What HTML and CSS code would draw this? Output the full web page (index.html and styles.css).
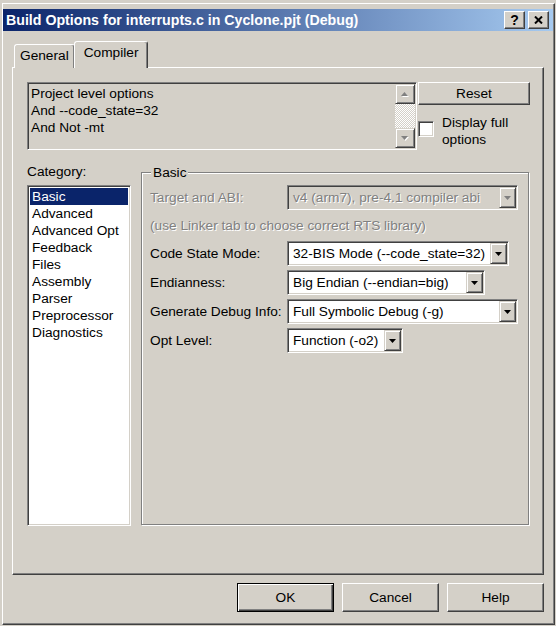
FILE: index.html
```html
<!DOCTYPE html>
<html>
<head>
<meta charset="utf-8">
<title>Build Options</title>
<link rel="stylesheet" href="styles.css">
</head>
<body>
<div class="window">
  <div class="titlebar">
    <span class="title">Build Options for interrupts.c in Cyclone.pjt (Debug)</span>
    <div class="tb-buttons">
      <span class="tb-btn help">?</span>
      <span class="tb-btn close"><svg width="9" height="8" viewBox="0 0 9 8"><path d="M1 0.5 L8 7.5 M8 0.5 L1 7.5" stroke="#000" stroke-width="2" fill="none"/></svg></span>
    </div>
  </div>
  <div class="content">
    <div class="tabs">
      <div class="tab">General</div>
      <div class="tab active">Compiler</div>
    </div>
    <div class="panel">
      <div class="top-row">
        <div class="options-box">
          <div class="options-text">Project level options<br>And --code_state=32<br>And Not -mt</div>
          <div class="vscroll">
            <div class="sb-btn"><svg width="8" height="5" viewBox="0 0 8 5"><path d="M4.5 1 L8 5 L1 5 Z" fill="#fff"/><path d="M3.5 0 L7 4 L0 4 Z" fill="#808080"/></svg></div>
            <div class="sb-track"></div>
            <div class="sb-btn"><svg width="8" height="5" viewBox="0 0 8 5"><path d="M1 1 L8 1 L4.5 5 Z" fill="#fff"/><path d="M0 0 L7 0 L3.5 4 Z" fill="#808080"/></svg></div>
          </div>
        </div>
        <div class="side">
          <div class="btn reset">Reset</div>
          <div class="check">
            <span class="checkbox"></span>
            <span class="check-label">Display full<br>options</span>
          </div>
        </div>
      </div>
      <div class="main-row">
        <div class="category">
          <div class="cat-label">Category:</div>
          <div class="listbox">
            <div class="item selected">Basic</div>
            <div class="item">Advanced</div>
            <div class="item">Advanced Opt</div>
            <div class="item">Feedback</div>
            <div class="item">Files</div>
            <div class="item">Assembly</div>
            <div class="item">Parser</div>
            <div class="item">Preprocessor</div>
            <div class="item">Diagnostics</div>
          </div>
        </div>
        <div class="group">
          <div class="legend">Basic</div>
          <div class="row first">
            <span class="label disabled">Target and ABI:</span>
            <div class="combo is-disabled w231">
              <span class="combo-text">v4 (arm7), pre-4.1 compiler abi</span>
              <span class="combo-btn"><svg width="7" height="4" viewBox="0 0 7 4"><path d="M0 0 L7 0 L3.5 4 Z" fill="#808080"/></svg></span>
            </div>
          </div>
          <div class="note disabled">(use Linker tab to choose correct RTS library)</div>
          <div class="row after-note">
            <span class="label">Code State Mode:</span>
            <div class="combo w222">
              <span class="combo-text">32-BIS Mode (--code_state=32)</span>
              <span class="combo-btn"><svg width="7" height="4" viewBox="0 0 7 4"><path d="M0 0 L7 0 L3.5 4 Z" fill="#000"/></svg></span>
            </div>
          </div>
          <div class="row">
            <span class="label">Endianness:</span>
            <div class="combo w198">
              <span class="combo-text">Big Endian (--endian=big)</span>
              <span class="combo-btn"><svg width="7" height="4" viewBox="0 0 7 4"><path d="M0 0 L7 0 L3.5 4 Z" fill="#000"/></svg></span>
            </div>
          </div>
          <div class="row">
            <span class="label">Generate Debug Info:</span>
            <div class="combo w231">
              <span class="combo-text">Full Symbolic Debug (-g)</span>
              <span class="combo-btn"><svg width="7" height="4" viewBox="0 0 7 4"><path d="M0 0 L7 0 L3.5 4 Z" fill="#000"/></svg></span>
            </div>
          </div>
          <div class="row">
            <span class="label">Opt Level:</span>
            <div class="combo w116">
              <span class="combo-text">Function (-o2)</span>
              <span class="combo-btn"><svg width="7" height="4" viewBox="0 0 7 4"><path d="M0 0 L7 0 L3.5 4 Z" fill="#000"/></svg></span>
            </div>
          </div>
        </div>
      </div>
    </div>
    <div class="footer">
      <div class="btn dlg default">OK</div>
      <div class="btn dlg">Cancel</div>
      <div class="btn dlg">Help</div>
    </div>
  </div>
</div>
</body>
</html>
```
FILE: styles.css
```css
* { box-sizing: border-box; }
html, body { margin: 0; padding: 0; }
body {
  width: 556px;
  height: 626px;
  overflow: hidden;
  background: #d4d0c8;
  font-family: "Liberation Sans", Arial, sans-serif;
  font-size: 13.7px;
  line-height: 17px;
  color: #000;
}
.window {
  margin: 3px 0 0 2px;
  width: 553px;
  height: 622px;
  border: 1px solid;
  border-color: #fff #404040 #404040 #fff;
  box-shadow: inset -1px -1px #808080;
  padding: 5px 1px 0 0;
}
.titlebar {
  height: 22px;
  background: linear-gradient(to right, #0a246a, #a6caf0);
  display: flex;
  align-items: center;
  justify-content: space-between;
  padding: 0 4px 0 3px;
}
.title {
  color: #fff;
  font-weight: bold;
  font-size: 14.2px;
  white-space: nowrap;
}
.tb-buttons { display: flex; gap: 3px; }
.tb-btn {
  width: 21px;
  height: 18px;
  background: #d4d0c8;
  border: 1px solid;
  border-color: #fff #404040 #404040 #fff;
  box-shadow: inset -1px -1px #808080;
  display: flex;
  align-items: center;
  justify-content: center;
  font-weight: bold;
  font-size: 14px;
  line-height: 14px;
}
.content { padding: 11px 0 0 9px; }
.tabs {
  display: flex;
  align-items: flex-end;
  height: 26px;
  padding-left: 2px;
  margin-bottom: -1px;
}
.tab {
  height: 24px;
  line-height: 21px;
  padding: 0 5px;
  border: 1px solid;
  border-bottom: none;
  border-color: #fff #404040 transparent #fff;
  border-radius: 3px 3px 0 0;
  box-shadow: inset -1px 0 #808080;
  background: #d4d0c8;
}
.tab.active {
  position: relative;
  z-index: 1;
  height: 27px;
  line-height: 21px;
  margin-left: -1px;
  padding: 0 9px;
}
.panel {
  width: 532px;
  height: 508px;
  border: 1px solid;
  border-color: #fff #404040 #404040 #fff;
  box-shadow: inset -1px -1px #808080;
  padding: 14px 0 0 14px;
}
.top-row { display: flex; }
.options-box {
  width: 390px;
  height: 68px;
  display: flex;
  border: 1px solid;
  border-color: #808080 #fff #fff #808080;
  box-shadow: inset 1px 1px #404040, inset -1px -1px #d4d0c8;
  padding: 1px;
}
.options-text {
  flex: 1;
  padding: 1px 0 0 2px;
  white-space: nowrap;
}
.vscroll {
  width: 20px;
  display: flex;
  flex-direction: column;
}
.sb-btn {
  height: 20px;
  background: #d4d0c8;
  border: 1px solid;
  border-color: #d4d0c8 #404040 #404040 #d4d0c8;
  box-shadow: inset 1px 1px #fff, inset -1px -1px #808080;
  display: flex;
  align-items: center;
  justify-content: center;
}
.sb-track {
  flex: 1;
  background: repeating-conic-gradient(#fff 0 25%, #d4d0c8 0 50%) 0 0 / 2px 2px;
}
.side {
  width: 112px;
  margin-left: 1px;
  display: flex;
  flex-direction: column;
}
.btn {
  background: #d4d0c8;
  border: 1px solid;
  border-color: #fff #404040 #404040 #fff;
  box-shadow: inset -1px -1px #808080;
  display: flex;
  align-items: center;
  justify-content: center;
}
.reset { height: 23px; }
.check {
  display: flex;
  align-items: flex-start;
  margin-top: 16px;
}
.checkbox {
  width: 16px;
  height: 16px;
  background: #fff;
  border: 1px solid;
  border-color: #808080 #fff #fff #808080;
  box-shadow: inset 1px 1px #404040, inset -1px -1px #d4d0c8;
}
.check-label {
  margin-left: 8px;
  margin-top: -7px;
}
.main-row {
  display: flex;
  margin-top: 13px;
}
.category { width: 104px; }
.cat-label { height: 17px; }
.listbox {
  margin-top: 5px;
  height: 341px;
  background: #fff;
  border: 1px solid;
  border-color: #808080 #fff #fff #808080;
  box-shadow: inset 1px 1px #404040, inset -1px -1px #d4d0c8;
  padding: 2px 2px;
}
.item {
  height: 17px;
  padding-left: 2px;
  white-space: nowrap;
}
.item.selected { background: #0a246a; color: #fff; }
.group {
  width: 388px;
  height: 353px;
  margin: 9px 0 0 10px;
  border: 1px solid #808080;
  box-shadow: inset 1px 1px #fff, 1px 1px #fff;
  padding: 0 0 0 8px;
}
.legend {
  width: fit-content;
  margin: -9px 0 0 1px;
  padding: 0 2px;
  background: #d4d0c8;
  height: 17px;
}
.row {
  display: flex;
  align-items: center;
  margin-top: 4px;
}
.row.first { margin-top: 4px; }
.row.after-note { margin-top: 7px; }
.label {
  width: 137px;
  flex: none;
  white-space: nowrap;
}
.disabled { color: #808080; text-shadow: 1px 1px #fff; }
.note { margin-top: 7px; height: 17px; white-space: nowrap; }
.combo {
  height: 25px;
  display: flex;
  border: 1px solid;
  border-color: #808080 #fff #fff #808080;
  box-shadow: inset 1px 1px #404040, inset -1px -1px #d4d0c8;
  padding: 1px;
  background: #fff;
}
.combo.is-disabled { background: #d4d0c8; }
.combo.is-disabled .combo-text { color: #808080; text-shadow: 1px 1px #fff; }
.w231 { width: 231px; }
.w222 { width: 222px; }
.w198 { width: 198px; }
.w116 { width: 116px; }
.combo-text {
  flex: 1;
  padding-left: 4px;
  line-height: 21px;
  white-space: nowrap;
  overflow: hidden;
}
.combo-btn {
  width: 17px;
  flex: none;
  background: #d4d0c8;
  border: 1px solid;
  border-color: #d4d0c8 #404040 #404040 #d4d0c8;
  box-shadow: inset 1px 1px #fff, inset -1px -1px #808080;
  display: flex;
  align-items: center;
  justify-content: center;
}
.footer {
  display: flex;
  justify-content: flex-end;
  gap: 8px;
  margin-top: 8px;
  width: 532px;
}
.dlg { width: 97px; height: 29px; }
.dlg.default {
  border-color: #000;
  box-shadow: inset 1px 1px #fff, inset -1px -1px #404040, inset -2px -2px #808080;
}
```
